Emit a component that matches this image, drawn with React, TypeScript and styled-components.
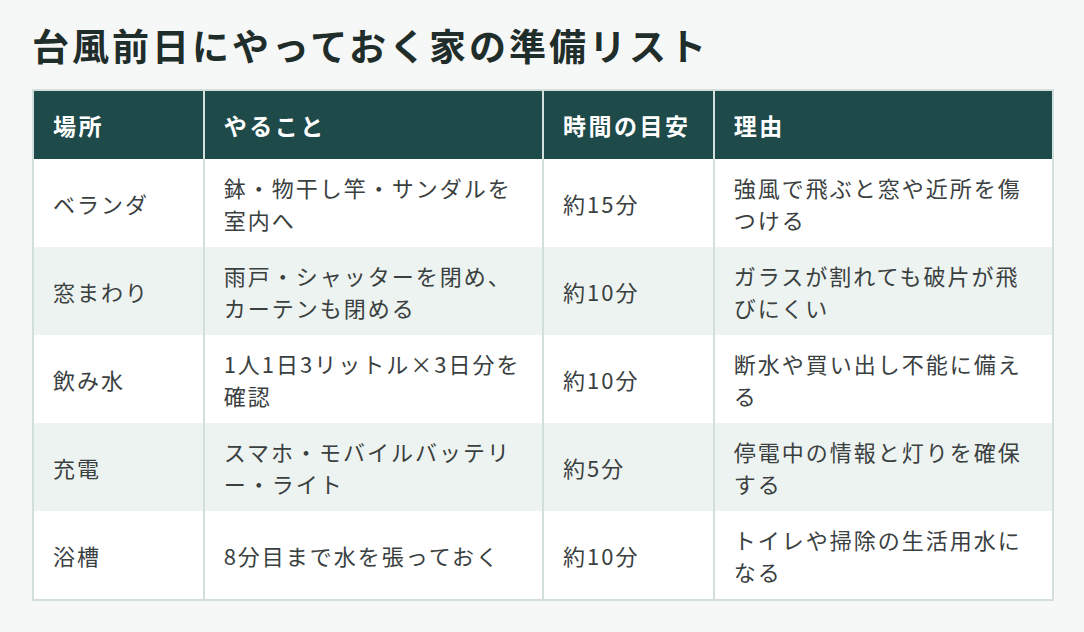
import styled, { createGlobalStyle } from "styled-components";

type Task = {
  place: string;
  todo: string;
  time: string;
  reason: string;
};

const tasks: Task[] = [
  {
    place: "ベランダ",
    todo: "鉢・物干し竿・サンダルを室内へ",
    time: "約15分",
    reason: "強風で飛ぶと窓や近所を傷つける",
  },
  {
    place: "窓まわり",
    todo: "雨戸・シャッターを閉め、カーテンも閉める",
    time: "約10分",
    reason: "ガラスが割れても破片が飛びにくい",
  },
  {
    place: "飲み水",
    todo: "1人1日3リットル×3日分を確認",
    time: "約10分",
    reason: "断水や買い出し不能に備える",
  },
  {
    place: "充電",
    todo: "スマホ・モバイルバッテリー・ライト",
    time: "約5分",
    reason: "停電中の情報と灯りを確保する",
  },
  {
    place: "浴槽",
    todo: "8分目まで水を張っておく",
    time: "約10分",
    reason: "トイレや掃除の生活用水になる",
  },
];

const headers = ["場所", "やること", "時間の目安", "理由"];

export default function App() {
  return (
    <>
      <GlobalStyle />
      <Page>
        <Title>台風前日にやっておく家の準備リスト</Title>
        <Table>
          {headers.map((h) => (
            <HeadCell key={h}>{h}</HeadCell>
          ))}
          {tasks.map((task, i) => {
            const alt = i % 2 === 1;
            return [
              <Cell key={`${task.place}-p`} $alt={alt}>
                {task.place}
              </Cell>,
              <Cell key={`${task.place}-t`} $alt={alt}>
                {task.todo}
              </Cell>,
              <Cell key={`${task.place}-m`} $alt={alt}>
                {task.time}
              </Cell>,
              <Cell key={`${task.place}-r`} $alt={alt}>
                {task.reason}
              </Cell>,
            ];
          })}
        </Table>
      </Page>
    </>
  );
}

const GlobalStyle = createGlobalStyle`
  html, body {
    margin: 0;
    padding: 0;
    background: #f6f8f7;
  }
  body {
    font-family: "Noto Sans CJK JP", "Noto Sans", sans-serif;
  }
`;

const Page = styled.div`
  display: flex;
  flex-direction: column;
  align-items: flex-start;
  gap: 18px;
  padding: 19px 30px 30px 32px;
`;

const Title = styled.h1`
  margin: 0;
  color: #1f2d2b;
  font-size: 37px;
  font-weight: 700;
  line-height: 52px;
  letter-spacing: 3px;
`;

const Table = styled.div`
  width: 1022px;
  box-sizing: border-box;
  display: grid;
  grid-template-columns: 1fr 2fr 1fr 2fr;
  column-gap: 2px;
  border: 2px solid #d3dfdc;
  background: #d3dfdc;
`;

const HeadCell = styled.div`
  display: flex;
  align-items: center;
  padding: 17px 19px 16px;
  background: #1f4a4a;
  color: #ffffff;
  font-size: 23px;
  font-weight: 700;
  line-height: 35px;
  letter-spacing: 2.5px;
  white-space: nowrap;
`;

const Cell = styled.div<{ $alt: boolean }>`
  display: flex;
  align-items: center;
  padding: 12px 20px 12px 19px;
  background: ${({ $alt }) => ($alt ? "#edf3f1" : "#ffffff")};
  color: #3a403f;
  font-size: 22px;
  font-weight: 400;
  line-height: 32px;
  letter-spacing: 2px;
`;
